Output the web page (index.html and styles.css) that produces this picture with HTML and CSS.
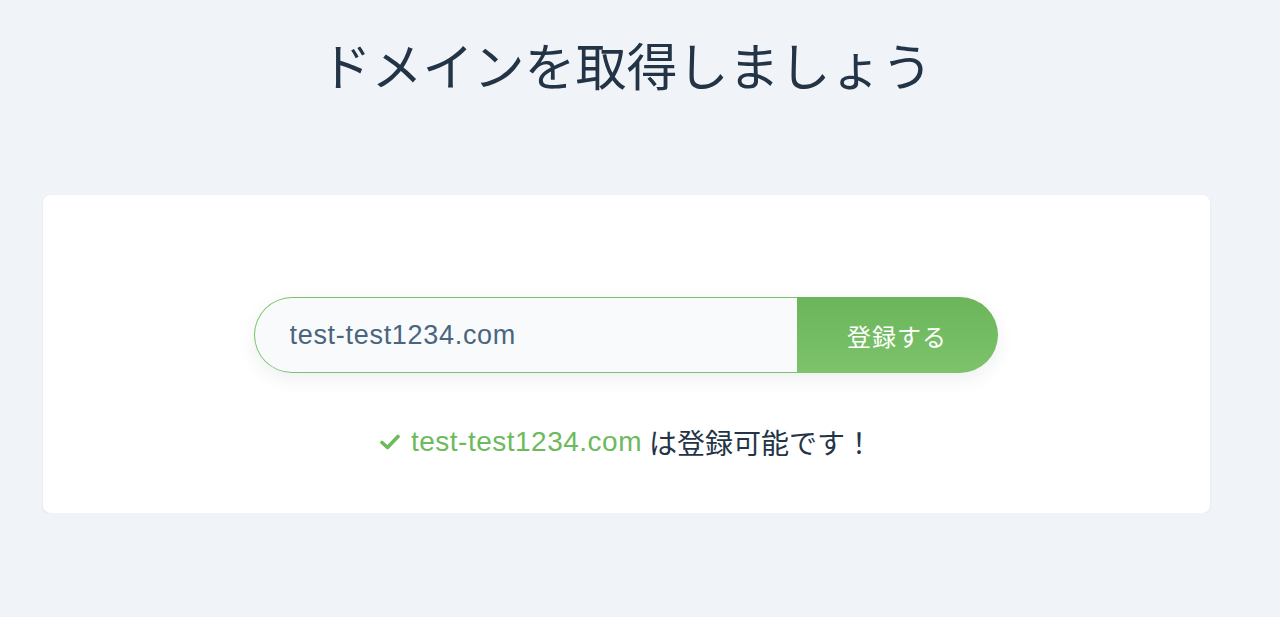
FILE: index.html
```html
<!DOCTYPE html>
<html lang="ja">
<head>
  <meta charset="UTF-8" />
  <title>ドメインを取得しましょう</title>
  <link rel="stylesheet" href="styles.css">
</head>
<body>
  <h1 class="titulo">ドメインを取得しましょう</h1>

  <div class="tarjeta">
    <form class="buscador" onsubmit="return false">
      <input type="text" class="dominio" value="test-test1234.com">
      <button type="submit" class="registrar">登録する</button>
    </form>

    <p class="resultado">
      <svg class="check" width="20" height="16" viewBox="0 0 20 16">
        <path d="M2 8.5 L7.5 13.5 L18 2.5" fill="none" stroke="#6dba5c" stroke-width="3.6" stroke-linecap="round" stroke-linejoin="round"/>
      </svg>
      <span class="nombre">test-test1234.com</span> は登録可能です！
    </p>
  </div>
</body>
</html>
```
FILE: styles.css
```css
body {
  margin: 0;
  padding: 37px 70px 0 43px;
  background-color: #f0f4f8;
  font-family: "Helvetica Neue", "Liberation Sans", "Noto Sans CJK JP", sans-serif;
  color: #243447;
}

.titulo {
  margin: 0;
  text-align: center;
  font-size: 51px;
  font-weight: normal;
  line-height: 64px;
  color: #243447;
}

.tarjeta {
  margin-top: 94px;
  background: #ffffff;
  border-radius: 8px;
  box-shadow: 0 1px 3px rgba(36, 52, 71, 0.08);
  height: 318px;
  box-sizing: border-box;
  padding-top: 102px;
  display: flex;
  flex-direction: column;
  align-items: center;
}

.buscador {
  display: flex;
  width: 744px;
  margin-left: -2px;
  height: 76px;
  border-radius: 38px;
  box-shadow: 0 6px 18px rgba(36, 52, 71, 0.08);
}

.dominio {
  flex: 1;
  height: 76px;
  box-sizing: border-box;
  border: 1px solid #7dc36b;
  border-right: none;
  border-radius: 38px 0 0 38px;
  background: #f8fafc;
  padding: 0 0 0 35px;
  font-family: "Liberation Sans", sans-serif;
  font-size: 27px;
  letter-spacing: 0.7px;
  color: #4a6580;
  outline: none;
}

.registrar {
  width: 201px;
  height: 76px;
  border: none;
  border-radius: 0 38px 38px 0;
  background: linear-gradient(#6cb55a, #7cc36c);
  color: #ffffff;
  font-family: "Noto Sans CJK JP", sans-serif;
  font-size: 24px;
  letter-spacing: 1px;
  cursor: pointer;
}

.resultado {
  margin: 49px 0 0 0;
  font-size: 28px;
  font-family: "Liberation Sans", "Noto Sans CJK JP", sans-serif;
  color: #243447;
  display: flex;
  align-items: center;
  gap: 7px;
}

.check {
  margin-right: 4px;
}

.nombre {
  color: #6dba5c;
  letter-spacing: 0.5px;
}
```
